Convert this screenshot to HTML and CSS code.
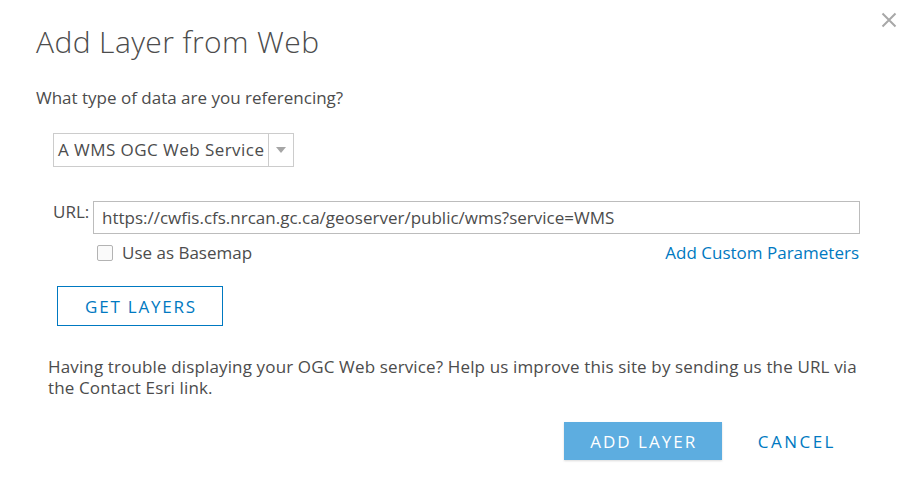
FILE: index.html
```html
<!DOCTYPE html>
<html>
<head>
<meta charset="utf-8">
<link rel="stylesheet" href="styles.css">
</head>
<body>
<div class="dialog">
  <button class="close" aria-label="Close">
    <svg width="16" height="16" viewBox="0 0 16 16"><path d="M1.5 1.5 L14.5 14.5 M14.5 1.5 L1.5 14.5" stroke="#a8a8a8" stroke-width="2" fill="none"/></svg>
  </button>
  <h1 class="title">Add Layer from Web</h1>
  <p class="question">What type of data are you referencing?</p>
  <div class="select">
    <span class="select-value">A WMS OGC Web Service</span>
    <span class="select-arrow"><svg width="10" height="6" viewBox="0 0 10 6"><path d="M0 0 H10 L5 6 Z" fill="#a6a6a6"/></svg></span>
  </div>
  <div class="url-row">
    <label class="url-label">URL:</label>
    <div class="url-col">
      <div class="url-input">https://cwfis.cfs.nrcan.gc.ca/geoserver/public/wms?service=WMS</div>
      <div class="options">
        <label class="check"><span class="box"></span>Use as Basemap</label>
        <a class="link">Add Custom Parameters</a>
      </div>
    </div>
  </div>
  <button class="btn-outline">GET LAYERS</button>
  <p class="help">Having trouble displaying your OGC Web service? Help us improve this site by sending us the URL via the Contact Esri link.</p>
  <div class="footer">
    <button class="btn-primary">ADD LAYER</button>
    <button class="btn-text">CANCEL</button>
  </div>
</div>
</body>
</html>
```
FILE: styles.css
```css
html, body {
  margin: 0;
  padding: 0;
  background: #fff;
}
body {
  font-family: "Open Sans", "Liberation Sans", sans-serif;
  color: #4c4c4c;
  width: 906px;
  height: 495px;
  overflow: hidden;
}
.dialog {
  position: relative;
  padding: 22px 0 0 36px;
}
.close {
  position: absolute;
  top: 12px;
  right: 9px;
  border: 0;
  background: none;
  padding: 0;
  width: 16px;
  height: 16px;
}
.close svg { display: block; }
.title {
  margin: 0;
  font-size: 30px;
  font-weight: 300;
  letter-spacing: 0.4px;
  line-height: 40px;
  color: #4c4c4c;
}
.question {
  margin: 24px 0 0 0;
  font-size: 17px;
  line-height: 24px;
}
.select {
  margin: 23px 0 0 17px;
  display: flex;
  width: 239px;
  height: 32px;
  border: 1px solid #ccc;
}
.select-value {
  flex: 1;
  font-size: 17px;
  letter-spacing: 0.45px;
  line-height: 32px;
  padding-left: 4px;
  border-right: 1px solid #ccc;
  white-space: nowrap;
}
.select-arrow {
  width: 24px;
  display: flex;
  align-items: center;
  justify-content: center;
}
.url-row {
  display: flex;
  margin: 34px 0 0 17px;
}
.url-label {
  font-size: 17px;
  line-height: 20px;
  width: 40px;
  padding-top: 1px;
}
.url-col {
  width: 767px;
}
.url-input {
  height: 31px;
  border: 1px solid #bcbcbc;
  font-size: 17px;
  line-height: 31px;
  padding-left: 8px;
  color: #4c4c4c;
}
.options {
  display: flex;
  justify-content: space-between;
  align-items: center;
  margin-top: 8px;
  padding-left: 4px;
}
.check {
  display: flex;
  align-items: center;
  font-size: 17px;
  line-height: 22px;
}
.box {
  width: 14px;
  height: 14px;
  border: 1px solid #b3b3b3;
  border-radius: 2px;
  margin-right: 9px;
  background: #fafafa;
}
.link {
  color: #0079c1;
  font-size: 17px;
  line-height: 22px;
  margin-right: 1px;
}
.btn-outline {
  display: block;
  margin: 22px 0 0 21px;
  width: 166px;
  height: 40px;
  border: 1px solid #0079c1;
  background: #fff;
  color: #0079c1;
  font-family: inherit;
  font-size: 17px;
  letter-spacing: 1.8px;
  padding: 0 0 0 2px;
}
.help {
  margin: 30px 40px 0 12px;
  font-size: 17px;
  letter-spacing: 0.14px;
  line-height: 21px;
}
.footer {
  display: flex;
  justify-content: flex-end;
  align-items: center;
  margin: 24px 0 0 0;
  padding-right: 70px;
  gap: 36px;
}
.btn-primary {
  width: 158px;
  height: 38px;
  border: 0;
  background: #5dade0;
  color: #fff;
  font-family: inherit;
  font-size: 17px;
  letter-spacing: 2px;
  box-shadow: 0 1px 2px rgba(0,0,0,0.15);
  padding: 0 0 0 2px;
}
.btn-text {
  border: 0;
  background: none;
  color: #0079c1;
  font-family: inherit;
  font-size: 17px;
  letter-spacing: 2.5px;
  padding: 0;
}
```
